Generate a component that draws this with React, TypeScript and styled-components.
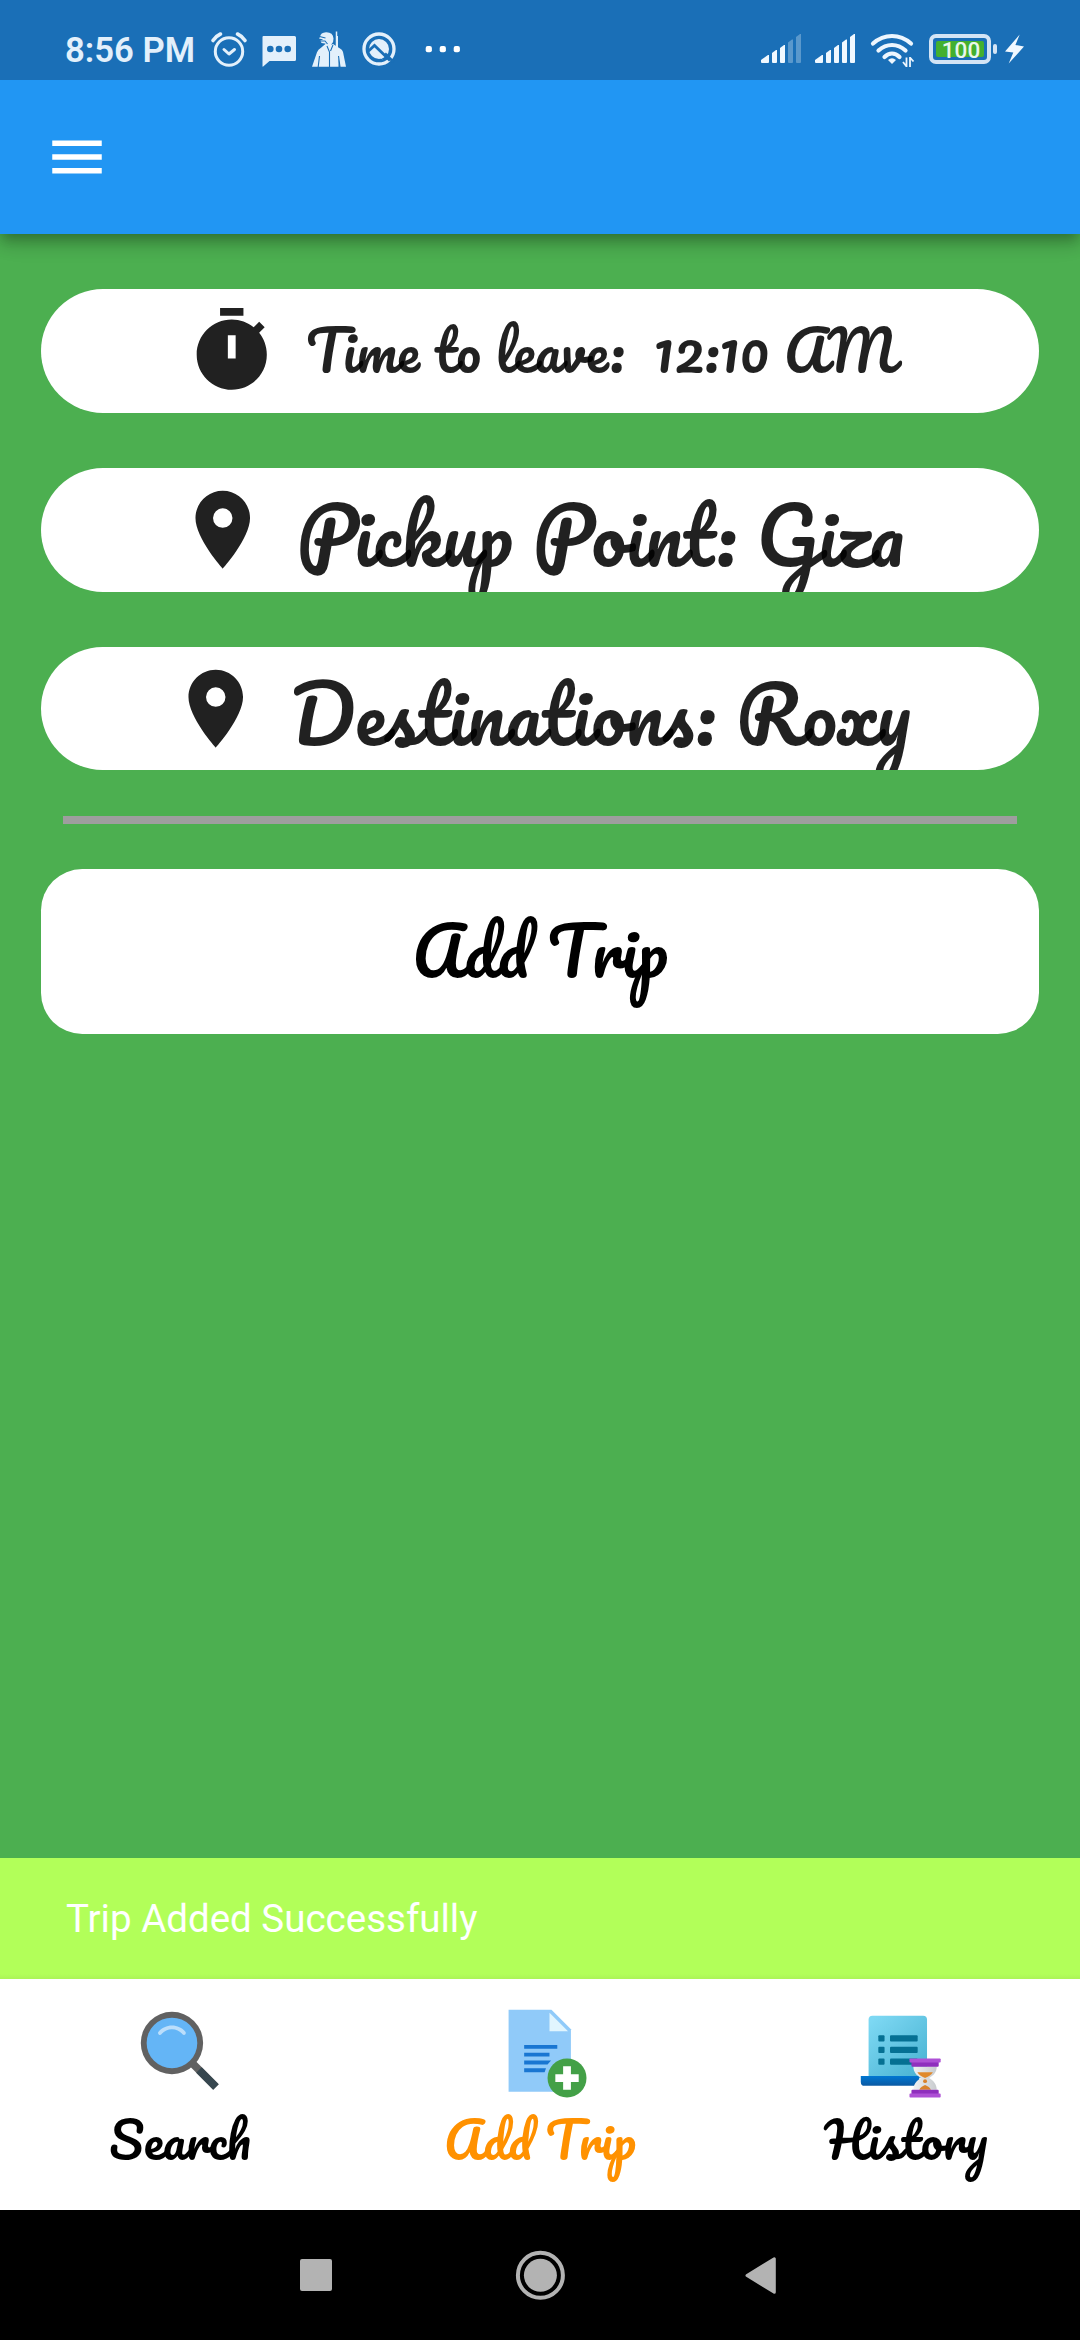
import React from "react";
import styled, { createGlobalStyle } from "styled-components";
import { FcSearch } from "react-icons/fc";

const GlobalStyle = createGlobalStyle`
  body {
    margin: 0;
    background: #000;
  }
`;

const SCRIPT = "Pacifico, cursive";
const TINT = "#e3f0fb";

const Screen = styled.div`
  width: 1080px;
  height: 2340px;
  display: flex;
  flex-direction: column;
  overflow: hidden;
  font-family: Roboto, sans-serif;
`;

const StatusBar = styled.header`
  position: relative;
  z-index: 1;
  height: 80px;
  flex: none;
  display: flex;
  justify-content: space-between;
  box-sizing: border-box;
  padding: 28px 52px 8px 65px;
  background: #1a6fb7;
  color: ${TINT};
`;

const StatusGroup = styled.div`
  display: flex;
  align-items: flex-start;
`;

const Clock = styled.span`
  width: 142px;
  font-size: 34.7px;
  line-height: 44px;
  font-weight: 600;
  white-space: nowrap;
`;

const Glyph = styled.svg<{ $gap?: number }>`
  display: block;
  flex: none;
  margin-right: ${(p) => p.$gap ?? 0}px;
`;

const AppBar = styled.div`
  position: relative;
  height: 154px;
  flex: none;
  display: flex;
  align-items: center;
  box-sizing: border-box;
  padding-left: 44px;
  background: #2196f3;
  box-shadow: 0 6px 11px -3px rgba(0, 0, 0, 0.2), 0 11px 14px 0 rgba(0, 0, 0, 0.14),
    0 3px 27px 0 rgba(0, 0, 0, 0.12);
`;

const Body = styled.main`
  flex: 1;
  box-sizing: border-box;
  padding: 55px 41.25px 0;
  background: #4caf50;
`;

const Pill = styled.div`
  height: 123.75px;
  margin-bottom: 55px;
  display: flex;
  justify-content: center;
  align-items: center;
  gap: 27.5px;
  overflow: hidden;
  border-radius: 62px;
  background: #fff;
  color: rgba(0, 0, 0, 0.87);
`;

const PillIcon = styled.svg`
  width: 93.5px;
  height: 93.5px;
  flex: none;
  fill: #212121;
`;

const PillText = styled.span<{ $size: number }>`
  max-height: 123.75px;
  margin: -1px 0 1px;
  font-family: ${SCRIPT};
  font-size: ${(p) => p.$size}px;
  line-height: normal;
  white-space: pre;
`;

const Divider = styled.hr`
  height: 8.25px;
  margin: -9.5px 22px 45px;
  border: 0;
  background: #9e9e9e;
`;

const AddButton = styled.button`
  display: block;
  width: 100%;
  height: 165px;
  padding: 0 0 3px;
  border: 0;
  border-radius: 41.25px;
  background: #fff;
  color: #000;
  font-family: ${SCRIPT};
  font-size: 66px;
  line-height: normal;
`;

const Snackbar = styled.div`
  height: 121px;
  flex: none;
  display: flex;
  align-items: center;
  box-sizing: border-box;
  padding-left: 66px;
  background: linear-gradient(#b2ff59 0, #b2ff59 116px, #abf457 121px);
  color: #fff;
  font-size: 38.5px;
`;

const Tabs = styled.nav`
  height: 231px;
  flex: none;
  display: grid;
  grid-template-columns: repeat(3, 1fr);
  background: #fff;
`;

const Tab = styled.div<{ $active?: boolean }>`
  display: flex;
  flex-direction: column;
  align-items: center;
  justify-content: center;
  font-family: ${SCRIPT};
  font-size: 49.5px;
  line-height: 87px;
  color: ${(p) => (p.$active ? "#ff9100" : "#000")};

  svg {
    display: block;
    width: 93.5px;
    height: 93.5px;
  }
`;

const TabLabel = styled.span<{ $indent?: number }>`
  margin: -1.5px 0 1.5px;
  padding-left: ${(p) => p.$indent ?? 0}px;
`;

const SystemBar = styled.footer`
  height: 130px;
  flex: none;
  display: flex;
  justify-content: center;
  align-items: center;
  gap: 174px;
  background: #000;
`;

function PinIcon() {
  return (
    <PillIcon viewBox="0 0 24 24">
      <path d="M12 2C8.13 2 5 5.13 5 9c0 5.25 7 13 7 13s7-7.75 7-13c0-3.87-3.13-7-7-7zm0 9.5a2.5 2.5 0 0 1 0-5 2.5 2.5 0 0 1 0 5z" />
    </PillIcon>
  );
}

function TimerIcon() {
  return (
    <PillIcon viewBox="0 0 24 24">
      <path
        fillRule="evenodd"
        d="M15 1H9v2h6V1zm4.03 6.39l1.42-1.42-1.41-1.41-1.42 1.42C16.07 4.74 14.12 4 12 4c-4.97 0-9 4.03-9 9s4.03 9 9 9 9-4.03 9-9c0-2.12-.74-4.07-1.97-5.61zM11 8h2v6h-2V8z"
      />
    </PillIcon>
  );
}

function AddDocumentIcon() {
  return (
    <svg viewBox="0 0 48 48">
      <path d="M40 45H8V3h22l10 10z" fill="#90caf9" />
      <path d="M38.5 14H29V4.5z" fill="#e1f5fe" />
      <path d="M16 21h17v2H16zM16 25h13v2H16zM16 29h13.8l-1.8 2H16zM16 33h11.2l-.7 2H16z" fill="#1976d2" />
      <circle cx="38" cy="38" r="10" fill="#43a047" />
      <path d="M36 32h4v12h-4zM32 36h12v4H32z" fill="#fff" />
    </svg>
  );
}

function HistoryIcon() {
  return (
    <svg viewBox="0 0 48 48">
      <defs>
        <linearGradient id="sheet" x1="10" y1="8" x2="38" y2="38" gradientUnits="userSpaceOnUse">
          <stop offset="0" stopColor="#7dd8f3" />
          <stop offset="1" stopColor="#45b0d0" />
        </linearGradient>
        <linearGradient id="scroll" x1="0" y1="37" x2="0" y2="42" gradientUnits="userSpaceOnUse">
          <stop offset="0" stopColor="#0077d2" />
          <stop offset="1" stopColor="#0b59a2" />
        </linearGradient>
        <linearGradient id="glass" x1="31" y1="0" x2="43" y2="0" gradientUnits="userSpaceOnUse">
          <stop offset="0" stopColor="#f0f1f2" />
          <stop offset="1" stopColor="#c8cbce" />
        </linearGradient>
      </defs>
      <path d="M36 6H10a2 2 0 0 0-2 2v30h30V8a2 2 0 0 0-2-2z" fill="url(#sheet)" />
      <path d="M34 42H6a2 2 0 0 1-2-2v-3h30z" fill="url(#scroll)" />
      <g fill="#057093">
        {[16, 22, 28].map((y) => (
          <React.Fragment key={y}>
            <rect x="13" y={y} width="3.2" height="3.2" rx="0.5" />
            <rect x="19" y={y} width="14.2" height="3.2" rx="0.5" />
          </React.Fragment>
        ))}
      </g>
      <path d="M31 32h12c0 3-1.5 4.7-4 6 2.5 1.3 4 3.5 4 6H31c0-2.5 1.5-4.7 4-6-2.5-1.3-4-3-4-6z" fill="url(#glass)" />
      <path d="M33 35h8c-.8 1.3-2 2-4 3-2-1-3.2-1.7-4-3z" fill="#e08a2c" />
      <circle cx="37" cy="39.6" r="1" fill="#d9822b" />
      <path d="M34 44c.5-1 1.5-1.800 3-2.400 1.5.6 2.5 1.4 3 2.400z" fill="#d9822b" />
      <g fill="#8f2fbd">
        <rect x="30" y="29" width="14" height="3.200" rx="0.5" />
        <rect x="30" y="44" width="14" height="3" rx="0.5" />
      </g>
      <g fill="#ae50d5">
        <rect x="29" y="28" width="16" height="2" rx="0.4" />
        <rect x="29" y="46" width="16" height="2" rx="0.4" />
      </g>
    </svg>
  );
}

const SIGNAL_BARS = [
  { left: 0, right: 8, topLeft: 60, topRight: 55 },
  { left: 11, right: 16, topLeft: 53, topRight: 50 },
  { left: 19, right: 24, topLeft: 48, topRight: 45 },
  { left: 27, right: 32, topLeft: 42.5, topRight: 39.5 },
  { left: 35, right: 40, topLeft: 37, topRight: 34 },
];

function SignalIcon({ level, gap }: { level: number; gap: number }) {
  return (
    <Glyph viewBox="0 28 41 44" width="41" height="44" $gap={gap} fill="#f0f8ff">
      {SIGNAL_BARS.map((b, i) => (
        <path
          key={b.left}
          opacity={i < level ? 1 : 0.3}
          d={`M${b.left} ${b.topLeft}L${b.right - 1} ${b.topRight}h1V62q0 1-1 1H${b.left + 1}q-1 0-1-1z`}
        />
      ))}
    </Glyph>
  );
}

export default function App() {
  return (
    <Screen>
      <GlobalStyle />
      <StatusBar>
        <StatusGroup>
          <Clock>8:56 PM</Clock>
          <Glyph viewBox="207 28 42 44" width="42" height="44" $gap={9} fill="none" stroke={TINT} strokeLinecap="round">
            <circle cx="229" cy="51.5" r="13.7" strokeWidth="3" />
            <path d="M224 49.500l5 4.500 5.500-4.500" strokeWidth="3" strokeLinejoin="round" />
            <path d="M213 40.500q3-4.500 7.500-6.500M245 40.500q-3-4.500-7.500-6.500" strokeWidth="3.6" />
          </Glyph>
          <Glyph viewBox="258 28 42 44" width="42" height="44" $gap={9}>
            <path d="M263.500 36h31q1.500 0 1.500 1.500v22q0 1.500-1.500 1.500h-25l-6.300 5.500q-.7.500-.7-.5V37q0-1 1-1z" fill={TINT} />
            <g fill="#1a6fb7">
              <circle cx="270.3" cy="49" r="3.3" />
              <circle cx="279" cy="49" r="3.3" />
              <circle cx="287.7" cy="49" r="3.3" />
            </g>
          </Glyph>
          <Glyph viewBox="309 28 42 44" width="42" height="44" $gap={9}>
            <path
              fill={TINT}
              d="M312 66.700l5-14.500q1-3 4-4.500l5-4.200 2.500 2.500 4.500-2 7 4.500q2.500 1 3 3.500l3 14.700h-6l-1.500-9v9zM320 37q.5-4.500 6-4.800 7-.2 7.500 6.300.2 4-2.200 6l-1.800 2-4.500-3-3.500-.5-1.200-2.500 3-1-4.300-1z"
            />
            <path d="M336.500 31.500v19" stroke={TINT} strokeWidth="1.5" />
            <path d="M337 36v15" stroke={TINT} strokeWidth="2" />
            <path
              d="M319.500 36.500l6 1.500M320 41h5l2.500 3M327 46l2.500 6v15M333 45l-2.500 6M319.500 56l-1.300 11M338.500 56l1.500 11"
              fill="none"
              stroke="#1a6fb7"
              strokeWidth="1.1"
            />
          </Glyph>
          <Glyph viewBox="360 28 42 44" width="42" height="44" $gap={21}>
            <circle cx="379" cy="49" r="15" fill="none" stroke={TINT} strokeWidth="3.3" />
            <circle cx="379" cy="49" r="10" fill={TINT} />
            <path d="M368.500 51l6-5.500 15.500 15" fill="none" stroke="#1a6fb7" strokeWidth="2.8" />
            <path d="M372 54.500l3-3 8 8z" fill={TINT} />
            <path d="M385 53.500l8.500 8.500" stroke="#1a6fb7" strokeWidth="2.5" />
          </Glyph>
          <Glyph viewBox="423 28 42 44" width="42" height="44" fill="#fff">
            <rect x="425.7" y="46" width="6.2" height="6.2" rx="2" />
            <rect x="439.7" y="46" width="6.2" height="6.2" rx="2" />
            <rect x="453.7" y="46" width="6.2" height="6.2" rx="2" />
          </Glyph>
        </StatusGroup>
        <StatusGroup>
          <SignalIcon level={3} gap={13} />
          <SignalIcon level={5} gap={13} />
          <Glyph viewBox="869 28 46 44" width="46" height="44" $gap={12} fill="none" stroke="#edf6fe">
            <path
              d="M873 43.500q8.500-7.500 19-7.500t19 7.500M878.500 50.500q6-5.500 13.500-5.500t13.500 5.500M884.500 57q3.500-3.500 7.500-3.500t7.500 3.500"
              strokeWidth="4.2"
              strokeLinecap="round"
            />
            <path d="M888 60q4-3.500 8 0l-4 4z" fill="#edf6fe" stroke="none" />
            <path d="M906.500 67V57.500M910 57v10M903 62l3.500 4.500M913.500 61.500l-3.500-4" strokeWidth="1.8" />
          </Glyph>
          <Glyph viewBox="927 28 72 44" width="72" height="44" $gap={5}>
            <rect x="931" y="36" width="58" height="26" rx="5" fill="none" stroke="#d3e4f5" strokeWidth="4" />
            <rect x="936" y="41" width="48" height="16" rx="2" fill="#43b02f" />
            <rect x="993" y="44" width="4" height="10" rx="2" fill="#d3e4f5" />
            <text x="961" y="57.6" textAnchor="middle" fontFamily="Roboto" fontWeight="500" fontSize="22.5" fill="#e9f7ec">
              100
            </text>
          </Glyph>
          <Glyph viewBox="1004 28 24 44" width="24" height="44" fill="#f0f8ff">
            <path d="M1019.700 34.500L1005 51.500l8.300 1-4.600 11 15.300-17-8.600-1.500z" />
          </Glyph>
        </StatusGroup>
      </StatusBar>

      <AppBar>
        <svg viewBox="0 0 24 24" width="66" height="66" fill="#fff">
          <path d="M3 18h18v-2H3v2zm0-5h18v-2H3v2zm0-7v2h18V6H3z" />
        </svg>
      </AppBar>

      <Body>
        <Pill>
          <TimerIcon />
          <PillText $size={55}>{"Time to leave:  12:10 AM"}</PillText>
        </Pill>
        <Pill>
          <PinIcon />
          <PillText $size={77}>Pickup Point: Giza</PillText>
        </Pill>
        <Pill>
          <PinIcon />
          <PillText $size={77}>Destinations: Roxy</PillText>
        </Pill>
        <Divider />
        <AddButton>Add Trip</AddButton>
      </Body>

      <Snackbar>Trip Added Successfully</Snackbar>

      <Tabs>
        <Tab>
          <FcSearch />
          <TabLabel>Search</TabLabel>
        </Tab>
        <Tab $active>
          <AddDocumentIcon />
          <TabLabel>Add Trip</TabLabel>
        </Tab>
        <Tab>
          <HistoryIcon />
          <TabLabel $indent={12}>History</TabLabel>
        </Tab>
      </Tabs>

      <SystemBar>
        <svg viewBox="0 0 50 50" width="50" height="50" fill="#b3b3b3">
          <rect x="9" y="9" width="32" height="32" rx="2" />
        </svg>
        <svg viewBox="0 0 50 50" width="50" height="50">
          <circle cx="25.4" cy="25.3" r="22.5" fill="none" stroke="#b3b3b3" strokeWidth="4" />
          <circle cx="25.4" cy="25.3" r="16.5" fill="#b3b3b3" />
        </svg>
        <svg viewBox="0 0 50 50" width="50" height="50" fill="#b3b3b3" stroke="#b3b3b3" strokeWidth="3" strokeLinejoin="round">
          <path d="M8 25.500L35.300 8.800v33.400z" />
        </svg>
      </SystemBar>
    </Screen>
  );
}
